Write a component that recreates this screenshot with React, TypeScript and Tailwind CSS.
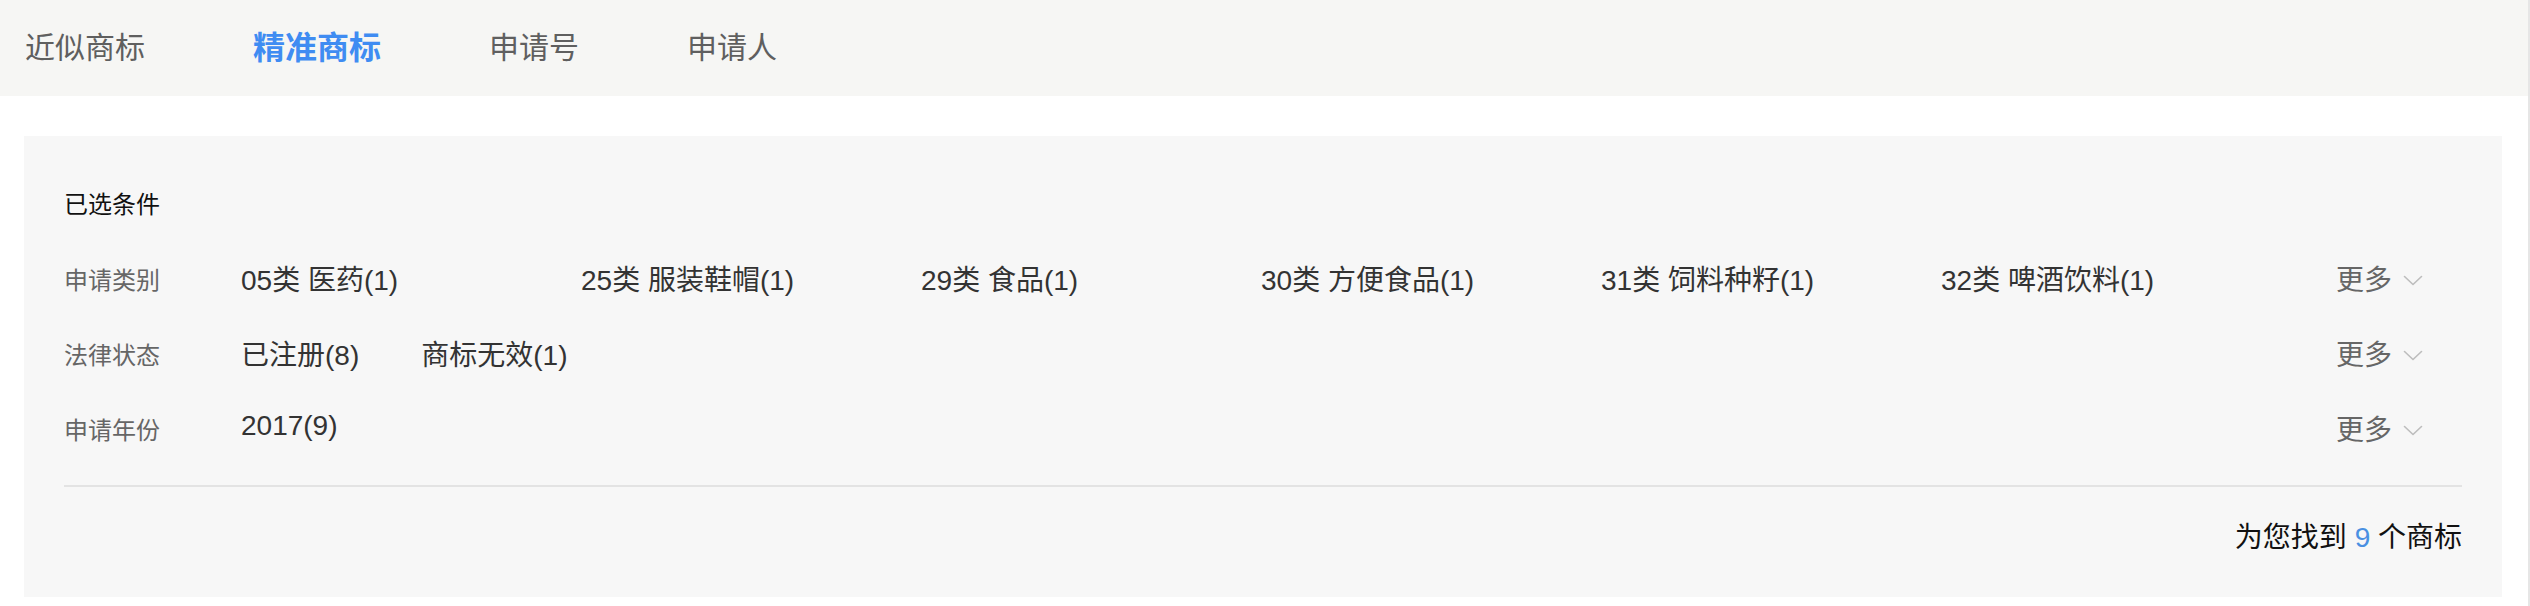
import React from "react";

const tabs = ["近似商标", "精准商标", "申请号", "申请人"];
const activeTab = 1;

type Filter = { label: string; items: string[]; fixed?: boolean };

const filters: Filter[] = [
  {
    label: "申请类别",
    items: ["05类 医药(1)", "25类 服装鞋帽(1)", "29类 食品(1)", "30类 方便食品(1)", "31类 饲料种籽(1)", "32类 啤酒饮料(1)"],
    fixed: true,
  },
  { label: "法律状态", items: ["已注册(8)", "商标无效(1)"] },
  { label: "申请年份", items: ["2017(9)"] },
];

export default function App() {
  return (
    <div
      className="w-full min-h-[606px] bg-white border-r-2 border-[#e6e6e6]"
      style={{ fontFamily: '"Liberation Sans", "Noto Sans CJK SC", sans-serif' }}
    >
      {/* tab bar */}
      <div className="h-[96px] bg-[#f6f6f4] flex items-center pl-[25px] gap-[108px]">
        {tabs.map((t, i) =>
          i === activeTab ? (
            <span key={t} className="text-[32px] font-bold text-[#3f8cf2] leading-none">
              {t}
            </span>
          ) : (
            <span key={t} className="text-[30px] text-[#5f5f5f] leading-none">
              {t}
            </span>
          )
        )}
      </div>

      {/* selected conditions */}
      <div className="mt-10 ml-[24px] mr-[26px] bg-[#f7f7f7] px-10 pt-[52px] pb-[42px]">
        <div className="h-[34px] leading-[34px] text-[24px] text-[#111]">已选条件</div>

        <div className="mt-[21px]">
          {filters.map((f, idx) => (
            <div key={f.label} className="h-[75px] flex items-center">
              <div className="w-[177px] shrink-0 text-[24px] text-[#666]">{f.label}</div>
              <div className="flex items-center">
                {f.items.map((it) => (
                  <span
                    key={it}
                    className={
                      f.fixed
                        ? "w-[340px] shrink-0 text-[28px] text-[#333]"
                        : idx === 2
                          ? "mr-[62px] pb-[9px] text-[28px] text-[#333]"
                          : "mr-[62px] text-[28px] text-[#333]"
                    }
                  >
                    {it}
                  </span>
                ))}
              </div>
              <div className="ml-auto mr-[39px] flex items-center gap-[11px] text-[28px] text-[#666]">
                更多
                <ChevronDown />
              </div>
            </div>
          ))}
        </div>

        <div className="mt-[17px] h-[2px] bg-[#e3e3e3]" />

        <div className="mt-[34px] h-[34px] leading-[34px] text-right text-[28px] text-[#111]">
          为您找到 <span className="text-[#4a90e2]">9</span> 个商标
        </div>
      </div>
    </div>
  );
}

function ChevronDown() {
  return (
    <svg width="20" height="11" viewBox="0 0 20 11" fill="none" stroke="#bdbdbd" strokeWidth="1.6" strokeLinecap="round" strokeLinejoin="round">
      <polyline points="1.5 1.5 10 9.5 18.5 1.5" />
    </svg>
  );
}
